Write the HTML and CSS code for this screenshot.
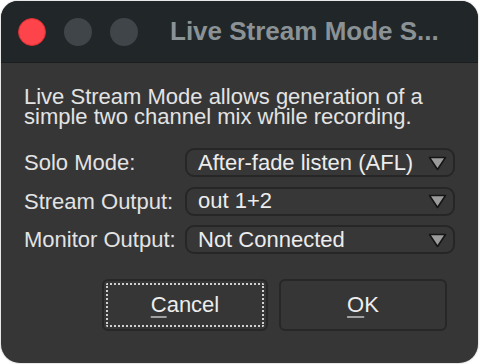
FILE: index.html
```html
<!DOCTYPE html>
<html>
<head>
<meta charset="utf-8">
<link rel="stylesheet" href="styles.css">
</head>
<body>
<div class="window">
  <div class="titlebar">
    <span class="light red"></span>
    <span class="light gray"></span>
    <span class="light gray"></span>
    <span class="title">Live Stream Mode S...</span>
  </div>
  <div class="content">
    <p class="intro">Live Stream Mode allows generation of a<br>simple two channel mix while recording.</p>
    <div class="form">
      <div class="label">Solo Mode:</div>
      <div class="select"><span>After-fade listen (AFL)</span><svg class="arrow" width="19" height="15" viewBox="0 0 19 15"><polygon points="1.5,1.5 17.5,1.5 9.5,13.5" fill="#9b9b9b" stroke="#151515" stroke-width="1.6" stroke-linejoin="round"/></svg></div>
      <div class="label">Stream Output:</div>
      <div class="select"><span>out 1+2</span><svg class="arrow" width="19" height="15" viewBox="0 0 19 15"><polygon points="1.5,1.5 17.5,1.5 9.5,13.5" fill="#9b9b9b" stroke="#151515" stroke-width="1.6" stroke-linejoin="round"/></svg></div>
      <div class="label">Monitor Output:</div>
      <div class="select"><span>Not Connected</span><svg class="arrow" width="19" height="15" viewBox="0 0 19 15"><polygon points="1.5,1.5 17.5,1.5 9.5,13.5" fill="#9b9b9b" stroke="#151515" stroke-width="1.6" stroke-linejoin="round"/></svg></div>
    </div>
    <div class="buttons">
      <div class="button cancel focused"><span><u>C</u>ancel</span></div>
      <div class="button ok"><span><u>O</u>K</span></div>
    </div>
  </div>
</div>
</body>
</html>
```

FILE: styles.css
```css
html, body {
  margin: 0;
  padding: 0;
  background: #ffffff;
}
body {
  width: 480px;
  height: 364px;
  overflow: hidden;
  font-family: "Liberation Sans", Arial, sans-serif;
}
.window {
  margin: 1px 2px 1px 1px;
  width: 477px;
  height: 362px;
  border-radius: 17px 17px 19px 19px;
  background: #363636;
  overflow: hidden;
  box-shadow: 0 0 2px rgba(0, 0, 0, 0.35);
}
.titlebar {
  height: 61px;
  background: #212628;
  border-bottom: 1px solid #1b1d1e;
  display: flex;
  align-items: center;
  padding-left: 17px;
}
.light {
  width: 28px;
  height: 28px;
  border-radius: 50%;
  box-sizing: border-box;
  margin-right: 18px;
  flex: none;
}
.light.red {
  background: #fd444a;
  border: 1px solid #d32f35;
}
.light.gray {
  background: #3f4548;
}
.title {
  margin-left: 14px;
  font-weight: bold;
  font-size: 26px;
  color: #8a9296;
  letter-spacing: 0;
}
.content {
  padding: 24px 0 0 23px;
}
.intro {
  margin: 0;
  font-size: 22px;
  line-height: 20px;
  color: #e3e3e3;
}
.form {
  margin-top: 21px;
  display: grid;
  grid-template-columns: 161px 270px;
  grid-auto-rows: 29px;
  row-gap: 9.5px;
}
.label {
  font-size: 22px;
  line-height: 29px;
  color: #e3e3e3;
}
.select {
  box-sizing: border-box;
  border: 2px solid #262626;
  border-radius: 9px;
  background: #373737;
  display: flex;
  align-items: center;
  justify-content: space-between;
  padding: 0 6px 0 11px;
  font-size: 22px;
  color: #ececec;
}
.arrow {
  display: block;
  margin-top: 1px;
}
.buttons {
  margin-top: 25px;
  padding-left: 78px;
  display: flex;
  gap: 11px;
}
.button {
  box-sizing: border-box;
  height: 52px;
  border: 2px solid #272727;
  border-radius: 6px;
  background: #363636;
  display: flex;
  align-items: center;
  justify-content: center;
  font-size: 22px;
  color: #ededed;
}
.button.cancel {
  width: 166px;
}
.button.ok {
  width: 168px;
}
.focused {
  outline: 2px dotted #d0d0d0;
  outline-offset: -6px;
}
.button u {
  text-decoration-color: #a0a0a0;
  text-decoration-thickness: 2px;
  text-underline-offset: 4px;
}
```
